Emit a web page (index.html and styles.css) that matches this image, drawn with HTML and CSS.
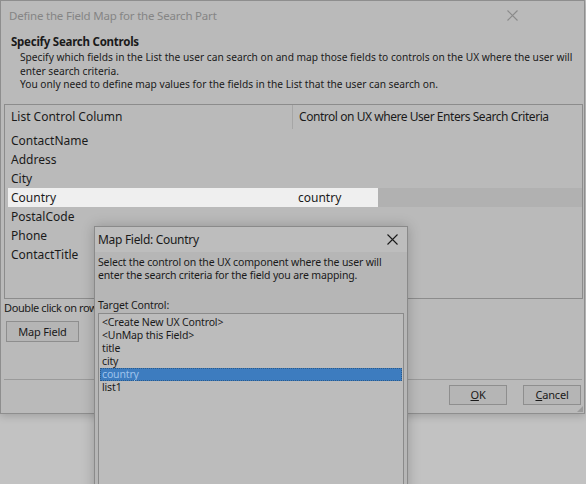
FILE: index.html
```html
<!DOCTYPE html>
<html>
<head>
<meta charset="utf-8">
<link rel="stylesheet" href="styles.css">
</head>
<body>
<div class="dialog">
  <div class="titlebar">
    <span class="title">Define the Field Map for the Search Part</span>
    <svg class="close" width="11" height="11" viewBox="0 0 11 11"><path d="M0.5 0.5L10.5 10.5M10.5 0.5L0.5 10.5" stroke="#8a8a8a" stroke-width="1.1" fill="none"/></svg>
  </div>
  <div class="intro">
    <div class="heading">Specify Search Controls</div>
    <div class="desc">
      <div>Specify which fields in the List the user can search on and map those fields to controls on the UX where the user will</div>
      <div>enter search criteria.</div>
      <div>You only need to define map values for the fields in the List that the user can search on.</div>
    </div>
  </div>
  <div class="grid">
    <div class="ghead">
      <div class="c1">List Control Column</div>
      <div class="c2">Control on UX where User Enters Search Criteria</div>
    </div>
    <div class="row"><div class="c1">ContactName</div></div>
    <div class="row"><div class="c1">Address</div></div>
    <div class="row"><div class="c1">City</div></div>
    <div class="row sel"><div class="c1">Country</div><div class="c2">country</div><div class="rest"></div></div>
    <div class="row"><div class="c1">PostalCode</div></div>
    <div class="row"><div class="c1">Phone</div></div>
    <div class="row"><div class="c1">ContactTitle</div></div>
  </div>
  <div class="hint">Double click on row</div>
  <div class="mapbar"><button class="btn mapbtn">Map Field</button></div>
  <div class="sep"></div>
  <div class="footer">
    <button class="btn okbtn"><u>O</u>K</button>
    <button class="btn okbtn"><u>C</u>ancel</button>
  </div>
  <div class="grip"></div>
</div>

<div class="child">
  <div class="ctitle">
    <span>Map Field: Country</span>
    <svg class="cclose" width="11" height="11" viewBox="0 0 11 11"><path d="M0.5 0.5L10.5 10.5M10.5 0.5L0.5 10.5" stroke="#1a1a1a" stroke-width="1.1" fill="none"/></svg>
  </div>
  <div class="cbody">
    <div class="ctext">Select the control on the UX component where the user will<br>enter the search criteria for the field you are mapping.</div>
    <div class="clabel">Target Control:</div>
    <div class="listbox">
      <div class="item">&lt;Create New UX Control&gt;</div>
      <div class="item">&lt;UnMap this Field&gt;</div>
      <div class="item">title</div>
      <div class="item">city</div>
      <div class="item isel">country</div>
      <div class="item">list1</div>
    </div>
  </div>
</div>
</body>
</html>
```

FILE: styles.css
```css
html, body {
  margin: 0;
  padding: 0;
}
body {
  width: 586px;
  height: 484px;
  overflow: hidden;
  background: #c2c2c2;
  font-family: "Noto Sans", "Open Sans", sans-serif;
  color: #1a1a1a;
  position: relative;
}
.dialog {
  width: 583px;
  height: 412px;
  border: 1px solid #8e8e8e;
  background: #bababa;
  box-shadow: 0 2px 8px rgba(0,0,0,0.18);
  display: flex;
  flex-direction: column;
  position: relative;
}
.titlebar {
  height: 32px;
  display: flex;
  align-items: center;
  padding-left: 8px;
  box-sizing: border-box;
  padding-bottom: 3px;
}
.title {
  font-size: 11.5px;
  letter-spacing: -0.2px;
  color: #858585;
  flex: 1;
}
.close {
  margin-right: 66px;
}
.intro {
  padding-left: 10px;
}
.heading {
  font-size: 11.5px;
  letter-spacing: -0.25px;
  font-weight: bold;
  line-height: 18px;
}
.desc {
  padding-left: 9px;
  font-size: 10.2px;
  line-height: 13.5px;
  white-space: nowrap;
}
.grid {
  margin: 12px 0 0 3px;
  width: 577px;
  height: 193px;
  border: 1px solid #8c8c8c;
  font-size: 12px;
}
.ghead {
  display: flex;
  height: 26px;
  padding-left: 3px;
}
.ghead .c1 {
  width: 281px;
  padding-left: 3px;
  border-right: 1px solid #a6a6a6;
  height: 24px;
  line-height: 24px;
}
.ghead .c2 {
  padding-left: 6px;
  line-height: 24px;
  letter-spacing: -0.45px;
}
.row {
  display: flex;
  height: 19px;
  line-height: 19px;
  padding-left: 3px;
}
.row .c1 {
  width: 281px;
  padding-left: 3px;
}
.row .c2 {
  width: 80px;
  padding-left: 6px;
}
.row.sel .c1, .row.sel .c2 {
  background: #efefef;
}
.row.sel .rest {
  flex: 1;
  background: #b1b1b1;
}
.hint {
  font-size: 11px;
  letter-spacing: -0.4px;
  padding-left: 3px;
  margin-top: 1px;
  line-height: 16px;
  white-space: nowrap;
}
.mapbar {
  padding: 3px 0 0 5px;
}
.btn {
  font-family: inherit;
  font-size: 11px;
  letter-spacing: -0.2px;
  color: #1a1a1a;
  background: #b5b5b5;
  border: 1px solid #8e8e8e;
  padding: 0;
  height: 21px;
  margin: 0;
}
.mapbtn {
  width: 73px;
}
.sep {
  margin: 37px 2px 0 3px;
  height: 1px;
  background: #9a9a9a;
}
.footer {
  display: flex;
  justify-content: flex-end;
  gap: 16px;
  padding: 5px 3px 0 0;
}
.okbtn {
  width: 58px;
  height: 20px;
}
.grip {
  position: absolute;
  right: 1px;
  bottom: 1px;
  width: 6px;
  height: 6px;
  background:
    radial-gradient(circle, #9a9a9a 0.8px, transparent 1px) 0 0 / 2px 2px;
  clip-path: polygon(100% 0, 100% 100%, 0 100%);
}
.child {
  position: absolute;
  left: 94px;
  top: 226px;
  width: 312px;
  height: 280px;
  border: 1px solid #8a8a8a;
  background: #b6b6b6;
  box-shadow: 0 0 12px rgba(0,0,0,0.22);
}
.ctitle {
  height: 25px;
  background: #bdbdbd;
  display: flex;
  align-items: center;
  padding-left: 3px;
  font-size: 12px;
  letter-spacing: -0.3px;
}
.ctitle span {
  flex: 1;
}
.cclose {
  margin-right: 9px;
}
.cbody {
  padding: 4px 0 0 3px;
  font-size: 10.5px;
  letter-spacing: -0.15px;
}
.ctext {
  line-height: 13px;
}
.clabel {
  margin-top: 17px;
  line-height: 13px;
}
.listbox {
  margin-top: 1px;
  width: 306px;
  height: 200px;
  border: 1px solid #8a8a8a;
  background: #bcbcbc;
  padding-top: 2px;
  box-sizing: border-box;
}
.item {
  height: 13px;
  line-height: 13px;
  padding-left: 2px;
  margin: 0 1px;
}
.isel {
  background: #3d7cbf;
  color: #9ec3ec;
  outline: 1px dotted #2a5a8a;
  outline-offset: -1px;
}
```
